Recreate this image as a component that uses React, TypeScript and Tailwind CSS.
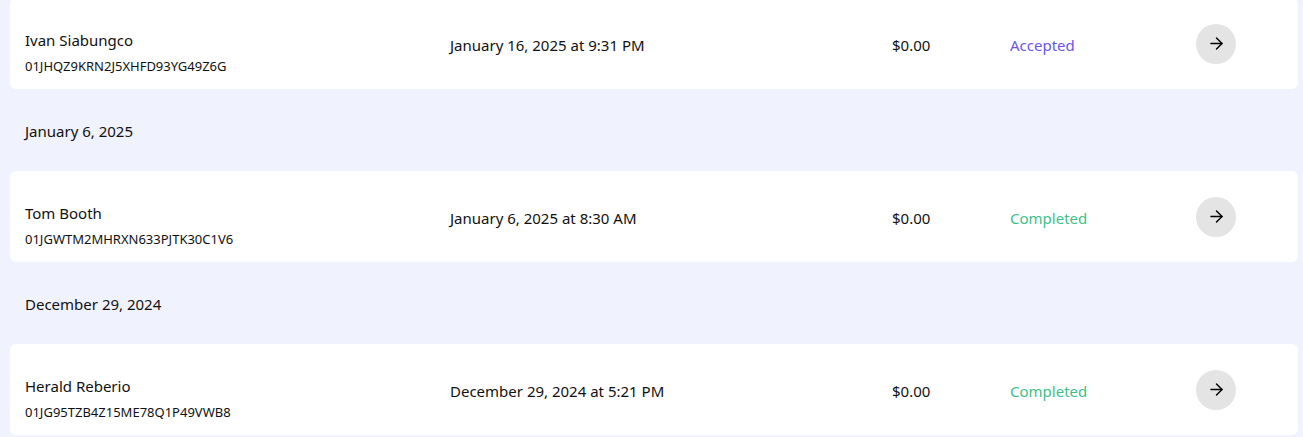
import React from 'react';
import { ArrowRight } from 'lucide-react';

type Order = {
  name: string;
  id: string;
  date: string;
  total: string;
  status: 'Accepted' | 'Completed';
};

type Group = {
  label?: string;
  orders: Order[];
};

const groups: Group[] = [
  {
    orders: [
      { name: 'Ivan Siabungco', id: '01JHQZ9KRN2J5XHFD93YG49Z6G', date: 'January 16, 2025 at 9:31 PM', total: '$0.00', status: 'Accepted' },
    ],
  },
  {
    label: 'January 6, 2025',
    orders: [
      { name: 'Tom Booth', id: '01JGWTM2MHRXN633PJTK30C1V6', date: 'January 6, 2025 at 8:30 AM', total: '$0.00', status: 'Completed' },
    ],
  },
  {
    label: 'December 29, 2024',
    orders: [
      { name: 'Herald Reberio', id: '01JG95TZB4Z15ME78Q1P49VWB8', date: 'December 29, 2024 at 5:21 PM', total: '$0.00', status: 'Completed' },
    ],
  },
];

const OrderRow: React.FC<{ order: Order }> = ({ order }) => (
  <div className="ml-[10px] mr-[5px] h-[91px] bg-white rounded-md flex items-center text-[#111]">
    {/* customer */}
    <div className="self-stretch w-[440px] pl-[15px] pt-[32px]">
      <div className="text-[15px] leading-[20px]">{order.name}</div>
      <div className="text-[13px] leading-[16px] mt-[8px]">{order.id}</div>
    </div>
    <div className="w-[442px] text-[15px] pt-[3px]">{order.date}</div>
    <div className="w-[118px] text-[15px] pt-[3px]">{order.total}</div>
    <div
      className={
        order.status === 'Accepted'
          ? 'w-[186px] text-[15px] pt-[3px] text-[#6c56e6]'
          : 'w-[186px] text-[15px] pt-[3px] text-[#3fbf88]'
      }
    >
      {order.status}
    </div>
    <button className="w-10 h-10 rounded-full bg-[#e4e4e4] flex items-center justify-center">
      <ArrowRight size={19} strokeWidth={1.8} className="text-black" />
    </button>
  </div>
);

const App: React.FC = () => {
  return (
    <div
      className="min-h-screen bg-[#f0f2fd] overflow-hidden"
      style={{ fontFamily: '"Noto Sans", "Open Sans", sans-serif' }}
    >
      <div className="-mt-[2px]">
        {groups.map((group, i) => (
          <div key={i}>
            {group.label && (
              <div className="h-[82px] pl-[25px] pt-[3px] flex items-center text-[15px] text-[#111]">
                {group.label}
              </div>
            )}
            {group.orders.map(order => (
              <OrderRow key={order.id} order={order} />
            ))}
          </div>
        ))}
      </div>
    </div>
  );
};

export default App;
